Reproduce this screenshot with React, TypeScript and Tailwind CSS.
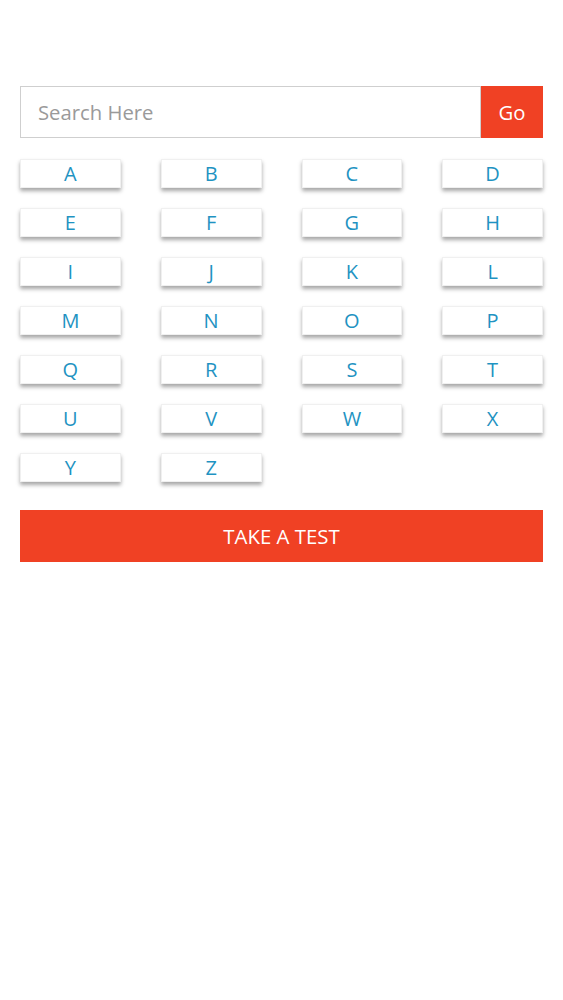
import React from "react";

const letters = "ABCDEFGHIJKLMNOPQRSTUVWXYZ".split("");

export default function App() {
  return (
    <div className="min-h-[1000px] w-full bg-white font-['Open_Sans',sans-serif]">
      <div className="px-[20px] pt-[86px]">
        <div className="flex h-[52px] w-full">
          <div className="flex flex-1 items-center border border-[#cfcfcf] bg-white pl-[17px]">
            <input
              type="text"
              placeholder="Search Here"
              className="w-full bg-transparent text-[20.3px] text-[#555] outline-none placeholder:text-[#9a9a9a]"
            />
          </div>
          <button className="flex h-full w-[62px] items-center justify-center bg-[#f04124] text-[20.3px] text-white">
            Go
          </button>
        </div>
        <div className="mt-[21px] grid grid-cols-4 gap-x-[40px] gap-y-[20px]">
          {letters.map((l) => (
            <button
              key={l}
              className="flex h-[29px] items-center justify-center border border-[#f0f0f0] bg-white text-[20px] leading-none text-[#1f93c2] shadow-[0_3px_4px_rgba(0,0,0,0.35)]"
            >
              {l}
            </button>
          ))}
        </div>
        <button className="mt-[28px] flex h-[52px] w-full items-center justify-center bg-[#f04124] text-[20.4px] text-white">
          TAKE A TEST
        </button>
      </div>
    </div>
  );
}
